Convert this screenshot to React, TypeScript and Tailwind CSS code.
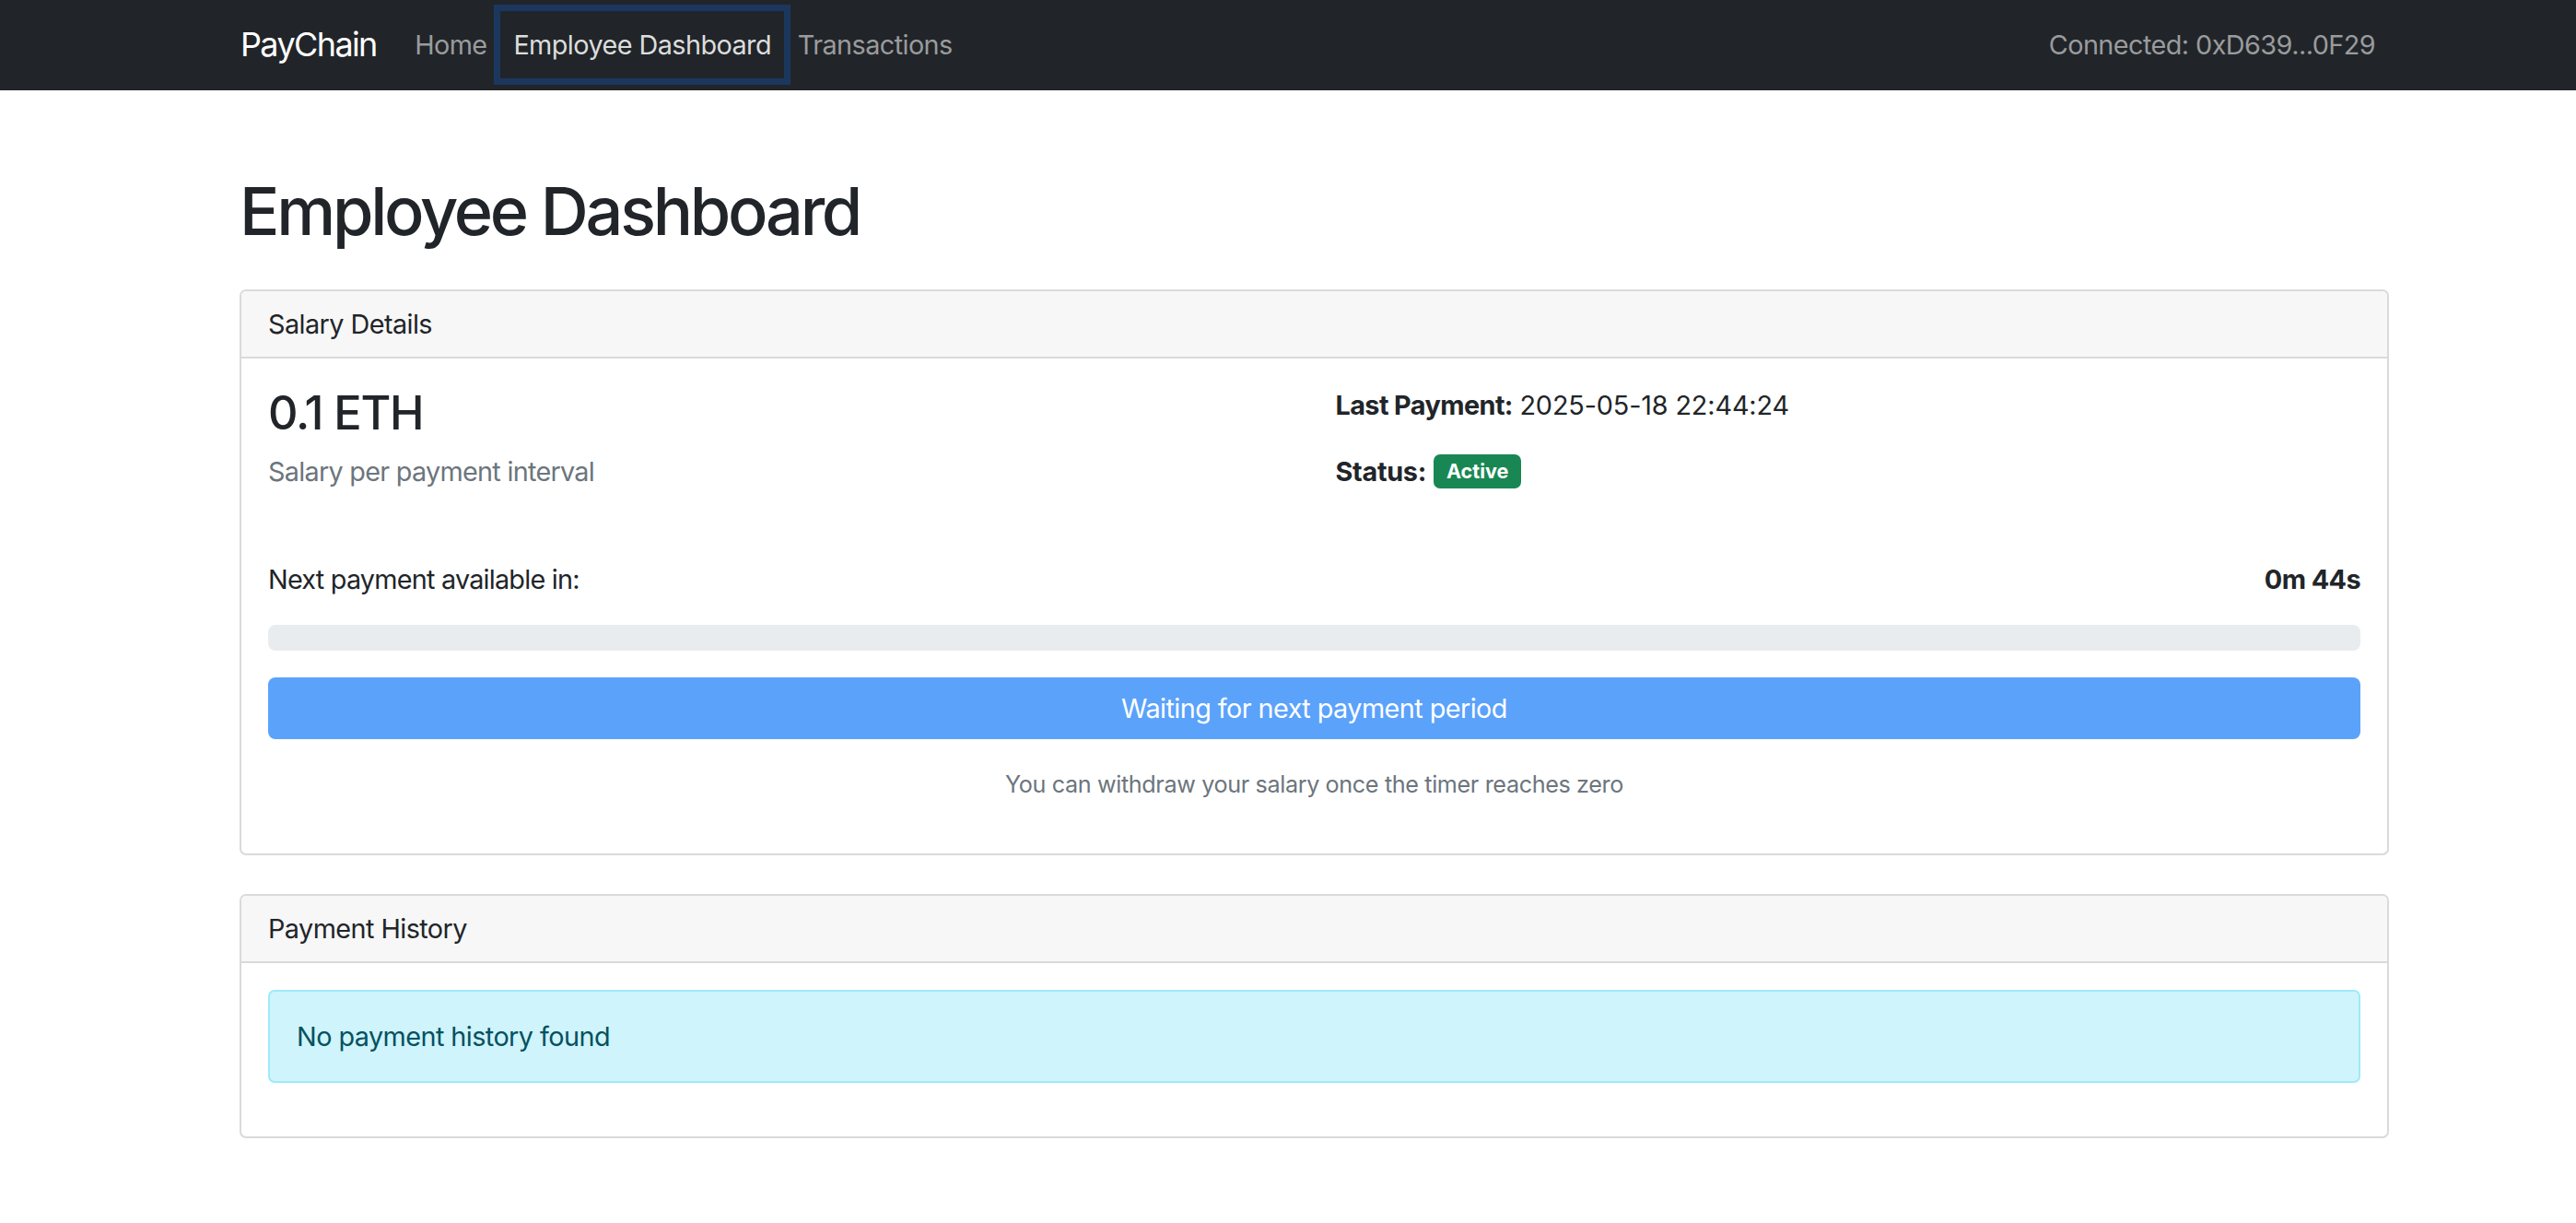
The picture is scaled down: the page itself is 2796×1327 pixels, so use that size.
import React from "react";

export default function App() {
  return (
    <div className="min-h-[1327px] w-full bg-white font-[Inter,'Noto_Sans',sans-serif] tracking-[-0.035em] text-[#212529]">
      {/* Navbar */}
      <nav className="h-[98px] w-full bg-[#212529]">
        <div className="ml-[261px] flex h-full w-[2332px] items-center justify-between pb-[2px]">
          <div className="flex items-center">
            <span className="mr-[27px] text-[36px] leading-[54px] tracking-[-0.045em] text-white">PayChain</span>
            <a className="flex h-[73px] items-center px-[14.4px] text-[28.8px] leading-[43px] text-[#9a9b9d]">Home</a>
            <a className="flex h-[73px] items-center px-[14.4px] text-[28.8px] leading-[43px] text-[#dcdddd] shadow-[0_0_0_7px_#1c375e]">
              Employee Dashboard
            </a>
            <a className="flex h-[73px] items-center px-[14.4px] text-[28.8px] leading-[43px] text-[#9a9b9d]">Transactions</a>
          </div>
          <span className="pr-[15px] text-[28.8px] leading-[43px] text-[#9a9b9d]">Connected: 0xD639...0F29</span>
        </div>
      </nav>

      {/* Main */}
      <main className="ml-[260px] w-[2333px]">
        <h1 className="mt-[88px] mb-[42px] text-[72px] font-medium leading-[86px] tracking-[-0.045em]">Employee Dashboard</h1>

        {/* Salary Details card */}
        <section className="rounded-[7px] border-2 border-[#dadada]">
          <div className="rounded-t-[6px] border-b-2 border-[#dadada] bg-[#f7f7f7] px-[29px] py-[14px] text-[28.8px] leading-[43px]">
            Salary Details
          </div>
          <div className="px-[29px] pt-[29px] pb-[29px]">
            <div className="grid grid-cols-2 gap-x-[46px]">
              <div>
                <h3 className="mb-[12px] text-[50.4px] font-medium leading-[60px] tracking-[-0.025em]">0.1 ETH</h3>
                <p className="text-[28.8px] leading-[43px] tracking-[-0.025em] text-[#6c757d]">Salary per payment interval</p>
              </div>
              <div>
                <p className="mb-[29px] text-[28.8px] leading-[43px]">
                  <strong className="font-bold tracking-[-0.02em]">Last Payment:</strong>{" "}
                  <span className="tracking-[-0.005em]">2025-05-18 22:44:24</span>
                </p>
                <p className="flex items-center text-[28.8px] leading-[43px]">
                  <strong className="font-bold tracking-[-0.01em]">Status:</strong>
                  <span className="ml-[8px] inline-flex h-[37px] items-center rounded-[7px] bg-[#198754] px-[14px] text-[21.6px] font-bold leading-none tracking-normal text-white">
                    Active
                  </span>
                </p>
              </div>
            </div>

            <div className="mt-[74px] flex items-center justify-between text-[28.8px] leading-[43px]">
              <span className="tracking-[-0.027em]">Next payment available in:</span>
              <span className="font-bold tracking-[-0.02em]">0m 44s</span>
            </div>

            <div className="mt-[28px] h-[28px] w-full overflow-hidden rounded-[8px] bg-[#e9ecef]" />

            <div className="mt-[29px] flex h-[67px] w-full items-center justify-center rounded-[8px] bg-[#5ba2fb] text-[28.8px] leading-[43px] text-white">
              Waiting for next payment period
            </div>

            <p className="mt-[30px] mb-[27px] text-center text-[25.2px] leading-[38px] tracking-[-0.015em] text-[#6c757d]">
              You can withdraw your salary once the timer reaches zero
            </p>
          </div>
        </section>

        {/* Payment History card */}
        <section className="mt-[42px] rounded-[7px] border-2 border-[#dadada]">
          <div className="rounded-t-[6px] border-b-2 border-[#dadada] bg-[#f7f7f7] px-[29px] py-[14px] text-[28.8px] leading-[43px]">
            Payment History
          </div>
          <div className="px-[29px] pt-[29px] pb-[29px]">
            <div className="mb-[29px] rounded-[7px] border-2 border-[#9eeaf9] bg-[#cff4fc] px-[29px] py-[27px] text-[28.8px] leading-[43px] text-[#055160]">
              No payment history found
            </div>
          </div>
        </section>
      </main>
    </div>
  );
}
